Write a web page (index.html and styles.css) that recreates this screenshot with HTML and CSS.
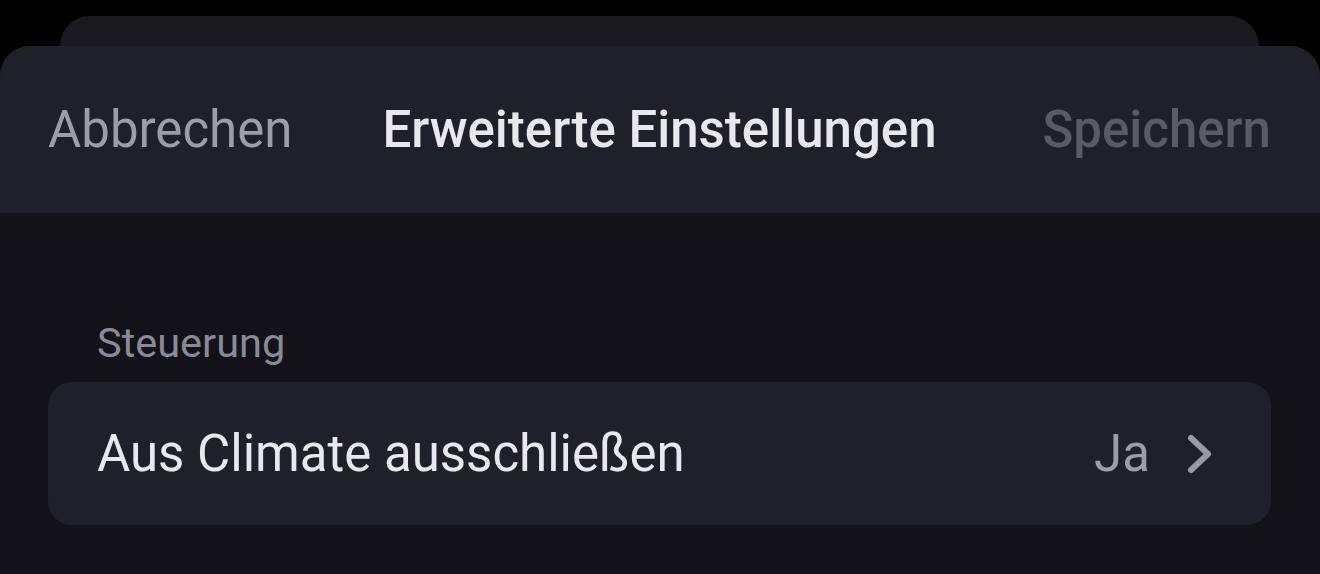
FILE: index.html
```html
<!DOCTYPE html>
<html lang="de">
<head>
<meta charset="utf-8">
<title>Erweiterte Einstellungen</title>
<link rel="stylesheet" href="styles.css">
</head>
<body>
<div class="back-card"></div>
<div class="sheet">
  <header class="sheet-header">
    <button class="hdr-btn cancel">Abbrechen</button>
    <h1 class="title">Erweiterte Einstellungen</h1>
    <button class="hdr-btn save">Speichern</button>
  </header>
  <main class="sheet-body">
    <div class="section-label">Steuerung</div>
    <div class="row">
      <span class="row-label">Aus Climate ausschließen</span>
      <span class="row-value">Ja</span>
      <svg class="chevron" width="28" height="42" viewBox="0 0 28 42" aria-hidden="true">
        <path d="M5 5 L22 21 L5 37" fill="none" stroke="#9a9aa4" stroke-width="6" stroke-linecap="round" stroke-linejoin="round"/>
      </svg>
    </div>
  </main>
</div>
</body>
</html>
```
FILE: styles.css
```css
html, body {
  margin: 0;
  padding: 0;
  background: #000;
  height: 100%;
  overflow: hidden;
}
body {
  font-family: Roboto, "Noto Sans", "Liberation Sans", sans-serif;
}
.back-card {
  height: 30px;
  margin: 16px 61px 0 60px;
  background: #19191e;
  border-radius: 30px 30px 0 0;
}
.sheet {
  border-radius: 30px 30px 0 0;
  overflow: hidden;
  background: #121218;
  height: 528px;
}
.sheet-header {
  height: 167px;
  background: #20202a;
  display: grid;
  grid-template-columns: 1fr auto 1fr;
  align-items: center;
  padding: 0 49px 0 48px;
  box-sizing: border-box;
}
.hdr-btn {
  background: none;
  border: 0;
  padding: 0;
  font-family: inherit;
  font-size: 51px;
}
.cancel {
  color: #9d9da7;
  font-weight: 400;
  justify-self: start;
}
.save {
  color: #5b5b67;
  font-weight: 500;
  justify-self: end;
}
.title {
  margin: 0;
  font-size: 51px;
  font-weight: 500;
  color: #e8e8ee;
}
.sheet-body {
  padding: 105px 49px 0 48px;
}
.section-label {
  padding-left: 49px;
  font-size: 41.5px;
  color: #8a8a96;
  line-height: 50px;
  margin-bottom: 14px;
}
.row {
  height: 143px;
  background: #20202a;
  border-radius: 24px;
  display: flex;
  align-items: center;
  padding: 0 57px 0 49px;
}
.row-label {
  flex: 1;
  font-size: 51px;
  color: #e8e8ee;
}
.row-value {
  font-size: 51px;
  color: #9d9da7;
  margin-right: 36px;
}
.chevron {
  display: block;
}
```
